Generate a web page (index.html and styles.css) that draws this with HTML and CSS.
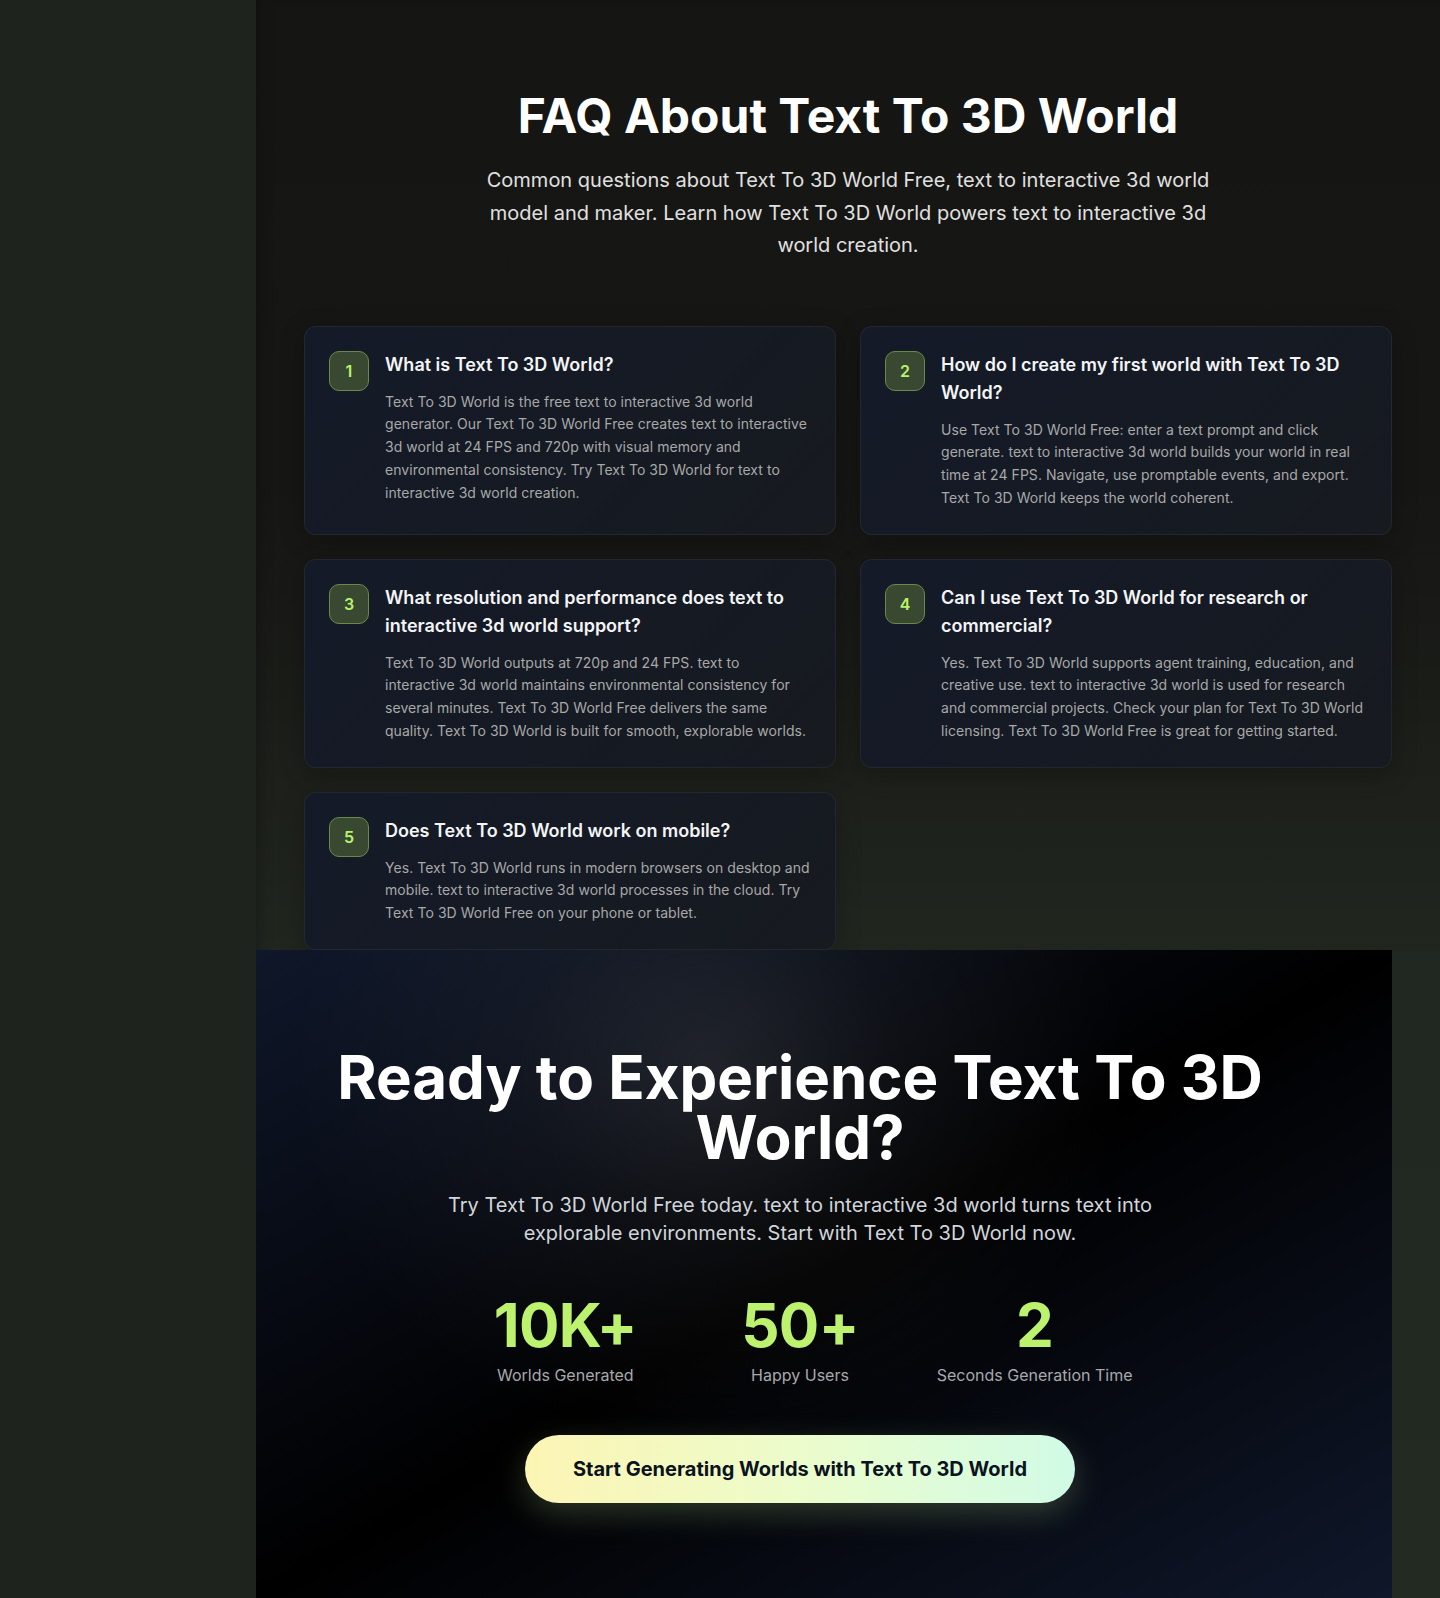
FILE: index.html
```html
<!DOCTYPE html>
<html lang="en">
<head>
<meta charset="utf-8">
<title>FAQ About Text To 3D World</title>
<link rel="stylesheet" href="styles.css">
</head>
<body>
<div class="layout">
  <aside class="sidebar"></aside>
  <main class="main">
    <section class="faq">
      <h2 class="faq-title">FAQ About Text To 3D World</h2>
      <p class="faq-sub">Common questions about Text To 3D World Free, text to interactive 3d world model and maker. Learn how Text To 3D World powers text to interactive 3d world creation.</p>
      <div class="faq-grid">
        <article class="card">
          <div class="badge">1</div>
          <div class="card-body">
            <h3 class="card-title">What is Text To 3D World?</h3>
            <p class="card-text">Text To 3D World is the free text to interactive 3d world generator. Our Text To 3D World Free creates text to interactive 3d world at 24 FPS and 720p with visual memory and environmental consistency. Try Text To 3D World for text to interactive 3d world creation.</p>
          </div>
        </article>
        <article class="card">
          <div class="badge">2</div>
          <div class="card-body">
            <h3 class="card-title">How do I create my first world with Text To 3D World?</h3>
            <p class="card-text">Use Text To 3D World Free: enter a text prompt and click generate. text to interactive 3d world builds your world in real time at 24 FPS. Navigate, use promptable events, and export. Text To 3D World keeps the world coherent.</p>
          </div>
        </article>
        <article class="card">
          <div class="badge">3</div>
          <div class="card-body">
            <h3 class="card-title">What resolution and performance does text to interactive 3d world support?</h3>
            <p class="card-text">Text To 3D World outputs at 720p and 24 FPS. text to interactive 3d world maintains environmental consistency for several minutes. Text To 3D World Free delivers the same quality. Text To 3D World is built for smooth, explorable worlds.</p>
          </div>
        </article>
        <article class="card">
          <div class="badge">4</div>
          <div class="card-body">
            <h3 class="card-title">Can I use Text To 3D World for research or commercial?</h3>
            <p class="card-text">Yes. Text To 3D World supports agent training, education, and creative use. text to interactive 3d world is used for research and commercial projects. Check your plan for Text To 3D World licensing. Text To 3D World Free is great for getting started.</p>
          </div>
        </article>
        <article class="card">
          <div class="badge">5</div>
          <div class="card-body">
            <h3 class="card-title">Does Text To 3D World work on mobile?</h3>
            <p class="card-text">Yes. Text To 3D World runs in modern browsers on desktop and mobile. text to interactive 3d world processes in the cloud. Try Text To 3D World Free on your phone or tablet.</p>
          </div>
        </article>
      </div>
    </section>
    <section class="cta">
      <div class="cta-inner">
        <h2 class="cta-title">Ready to Experience Text To 3D World?</h2>
        <p class="cta-text">Try Text To 3D World Free today. text to interactive 3d world turns text into explorable environments. Start with Text To 3D World now.</p>
        <div class="stats">
          <div class="stat">
            <div class="stat-num">10K+</div>
            <div class="stat-label">Worlds Generated</div>
          </div>
          <div class="stat">
            <div class="stat-num">50+</div>
            <div class="stat-label">Happy Users</div>
          </div>
          <div class="stat">
            <div class="stat-num">2</div>
            <div class="stat-label">Seconds Generation Time</div>
          </div>
        </div>
        <a class="cta-btn" href="#">Start Generating Worlds with Text To 3D World</a>
      </div>
    </section>
  </main>
</div>
</body>
</html>
```

FILE: styles.css
```css
* {
  box-sizing: border-box;
}

html, body {
  margin: 0;
  padding: 0;
}

body {
  background: #1f241e;
  font-family: Inter, "Noto Sans", "Liberation Sans", sans-serif;
  color: #ffffff;
  min-height: 1598px;
  -webkit-font-smoothing: antialiased;
}

.layout {
  display: flex;
  min-height: 1598px;
}

.sidebar {
  width: 256px;
  flex: 0 0 256px;
  background: #1e231d;
}

.main {
  flex: 1 1 auto;
  display: flex;
  flex-direction: column;
  min-width: 0;
  background: linear-gradient(180deg, rgba(31, 36, 30, 0) 0%, #222a22 100%);
}

/* FAQ */
.faq {
  padding: 92px 48px 0;
  background: linear-gradient(180deg, #151513 0%, #161614 50%, #1a1c18 72%, #21261f 100%);
  box-shadow: inset 12px 0 16px -12px rgba(0, 0, 0, 0.35);
  display: flex;
  flex-direction: column;
  align-items: center;
}

.faq-title {
  margin: 0 0 24px;
  font-size: 48px;
  line-height: 48px;
  font-weight: 700;
  text-align: center;
  color: #ffffff;
}

.faq-sub {
  margin: 0 0 64px;
  max-width: 768px;
  font-size: 20px;
  line-height: 32.5px;
  color: #e0e0e0;
  text-align: center;
}

.faq-grid {
  width: 100%;
  display: grid;
  grid-template-columns: 1fr 1fr;
  gap: 24px;
}

.card {
  display: flex;
  gap: 16px;
  padding: 24px;
  border: 1px solid rgba(255, 255, 255, 0.06);
  border-radius: 12px;
  background: linear-gradient(135deg, #141a28 0%, #151a23 60%, #171a1f 100%);
  box-shadow: 0 6px 24px rgba(0, 0, 0, 0.25);
}

.badge {
  flex: 0 0 40px;
  width: 40px;
  height: 40px;
  border-radius: 10px;
  background: #394830;
  border: 1px solid #6a8a48;
  color: #b9f26c;
  font-size: 16px;
  font-weight: 600;
  display: flex;
  align-items: center;
  justify-content: center;
}

.card-body {
  flex: 1 1 auto;
  min-width: 0;
}

.card-title {
  margin: 0 0 12px;
  font-size: 18px;
  line-height: 28px;
  font-weight: 600;
  color: #f3f4f6;
}

.card-text {
  margin: 0;
  font-size: 14px;
  line-height: 22.75px;
  letter-spacing: 0.05px;
  color: #a8a8a8;
}

/* CTA */
.cta {
  margin-right: 48px;
  padding: 97px 48px 96px 0;
  background:
    radial-gradient(ellipse 420px 380px at 40% 18%, rgba(255, 255, 255, 0.1) 0%, rgba(255, 255, 255, 0.04) 45%, rgba(255, 255, 255, 0) 100%),
    linear-gradient(to bottom right, #0f172a 0%, #000000 50%, #0f172a 100%);
  display: flex;
  justify-content: center;
}

.cta-inner {
  max-width: 1024px;
  width: 100%;
  padding: 0 24px;
  display: flex;
  flex-direction: column;
  align-items: center;
  text-align: center;
}

.cta-title {
  margin: 0 0 24px;
  font-size: 60px;
  line-height: 60px;
  font-weight: 700;
  color: #ffffff;
}

.cta-text {
  margin: 0 0 48px;
  max-width: 768px;
  font-size: 20px;
  line-height: 28px;
  color: #d1d5db;
}

.stats {
  width: 100%;
  max-width: 672px;
  display: grid;
  grid-template-columns: repeat(3, 1fr);
  gap: 32px;
  margin-bottom: 48px;
}

.stat-num {
  font-size: 60px;
  line-height: 60px;
  font-weight: 700;
  color: #bdf26e;
  letter-spacing: -0.01em;
}

.stat-label {
  margin-top: 8px;
  font-size: 16px;
  line-height: 24px;
  color: #a8a8ad;
}

.cta-btn {
  display: inline-block;
  padding: 20px 48px;
  border-radius: 9999px;
  background: linear-gradient(90deg, #fcf5b4 0%, #ecfccb 50%, #d1fbe6 100%);
  color: #0b1220;
  font-size: 20px;
  line-height: 28px;
  font-weight: 700;
  text-decoration: none;
  box-shadow: 0 10px 32px rgba(200, 235, 150, 0.22);
}
```
